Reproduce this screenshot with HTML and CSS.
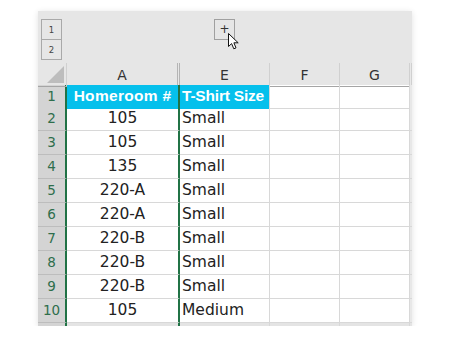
FILE: index.html
```html
<!DOCTYPE html>
<html lang="en">
<head>
    <meta charset="UTF-8">
    <title>Grouped columns</title>
    <link rel="stylesheet" href="styles.css">
</head>
<body>
    <div class="sheet">
        <div class="outline">
            <div class="levels">
                <div class="level">1</div>
                <div class="level">2</div>
            </div>
            <div></div>
            <div class="expand-cell">
                <div class="expand">+</div>
                <svg class="cursor" width="12" height="18" viewBox="0 0 12 18">
                    <path d="M0.5 0.5 L0.5 13.5 L3.6 10.6 L5.8 15.8 L8 14.9 L5.9 9.8 L10.2 9.8 Z" fill="#fff" stroke="#111" stroke-width="1" stroke-linejoin="round"/>
                </svg>
            </div>
        </div>

        <div class="row col-heads">
            <div class="corner"><span class="tri"></span></div>
            <div class="head hidden-after">A</div>
            <div class="head">E</div>
            <div class="head">F</div>
            <div class="head">G</div>
            <div class="edge"></div>
        </div>

        <div class="row first">
            <div class="num">1</div>
            <div class="cell a title wide">Homeroom #</div>
            <div class="cell e title tight">T-Shirt Size</div>
            <div class="cell"></div>
            <div class="cell"></div>
            <div class="edge"></div>
        </div>
        <div class="row"><div class="num">2</div><div class="cell a">105</div><div class="cell e">Small</div><div class="cell"></div><div class="cell"></div><div class="edge"></div></div>
        <div class="row"><div class="num">3</div><div class="cell a">105</div><div class="cell e">Small</div><div class="cell"></div><div class="cell"></div><div class="edge"></div></div>
        <div class="row"><div class="num">4</div><div class="cell a">135</div><div class="cell e">Small</div><div class="cell"></div><div class="cell"></div><div class="edge"></div></div>
        <div class="row"><div class="num">5</div><div class="cell a">220-A</div><div class="cell e">Small</div><div class="cell"></div><div class="cell"></div><div class="edge"></div></div>
        <div class="row"><div class="num">6</div><div class="cell a">220-A</div><div class="cell e">Small</div><div class="cell"></div><div class="cell"></div><div class="edge"></div></div>
        <div class="row"><div class="num">7</div><div class="cell a">220-B</div><div class="cell e">Small</div><div class="cell"></div><div class="cell"></div><div class="edge"></div></div>
        <div class="row"><div class="num">8</div><div class="cell a">220-B</div><div class="cell e">Small</div><div class="cell"></div><div class="cell"></div><div class="edge"></div></div>
        <div class="row"><div class="num">9</div><div class="cell a">220-B</div><div class="cell e">Small</div><div class="cell"></div><div class="cell"></div><div class="edge"></div></div>
        <div class="row"><div class="num">10</div><div class="cell a">105</div><div class="cell e">Medium</div><div class="cell"></div><div class="cell"></div><div class="edge"></div></div>
        <div class="row cut">
            <div class="num"></div><div class="cell a"></div><div class="cell e"></div><div class="cell"></div><div class="cell"></div><div class="edge"></div>
        </div>
    </div>
</body>
</html>
```

FILE: styles.css
```css
body {
    margin: 0;
    background-color: #fff;
    font-family: "DejaVu Sans", sans-serif;
    color: #222;
}
.sheet {
    width: 374px;
    margin: 11px 0 0 38px;
    background-color: #fff;
    box-shadow: 0 1px 6px rgba(0, 0, 0, 0.12);
}
.outline {
    display: grid;
    grid-template-columns: 29px 113px 232px;
    height: 52px;
    background-color: #e6e6e6;
}
.levels {
    display: flex;
    flex-direction: column;
    padding: 8px 0 0 3px;
}
.level {
    width: 19px;
    height: 19px;
    border: 1px solid #a9a9a9;
    margin-bottom: -1px;
    font-size: 8.5px;
    color: #444;
    display: flex;
    align-items: center;
    justify-content: center;
}
.expand-cell {
    position: relative;
    padding: 8px 0 0 34px;
}
.expand {
    width: 19px;
    height: 19px;
    border: 1px solid #a0a0a0;
    font-size: 12px;
    line-height: 18px;
    text-align: center;
    color: #333;
}
.cursor {
    position: absolute;
    left: 48px;
    top: 22px;
}
.row {
    display: grid;
    grid-template-columns: 29px 113px 90px 70px 70px 2px;
    height: 24px;
}
.row > div {
    box-sizing: border-box;
    border-bottom: 1px solid #d8d8d8;
}
.col-heads {
    height: 22px;
    background-color: #e6e6e6;
}
.col-heads > div {
    border-bottom: 1px solid #a5a5a5;
    border-right: 1px solid #d0d0d0;
}
.corner {
    position: relative;
}
.tri {
    position: absolute;
    right: 2px;
    bottom: 3px;
    width: 0;
    height: 0;
    border-left: 17px solid transparent;
    border-bottom: 17px solid #bdbdbd;
}
.head {
    font-size: 14px;
    color: #333;
    text-align: center;
    line-height: 22px;
    padding-top: 1px;
}
.col-heads .hidden-after {
    border-right: 3px double #b4b4b4;
}
.first {
    height: 22px;
}
.num {
    background-color: #d4d4d4;
    color: #2e6e4c;
    font-size: 13.5px;
    text-align: center;
    line-height: 23px;
    border-right: 2px solid #217346;
}
.row .num {
    border-bottom-color: #bdbdbd;
}
.cell {
    font-size: 15.5px;
    line-height: 23px;
    border-right: 1px solid #d8d8d8;
    white-space: nowrap;
    overflow: hidden;
}
.cell.a {
    text-align: center;
    border-right: 2px solid #217346;
}
.cell.e {
    padding-left: 2px;
}
.title {
    background-color: #05c0ec;
    color: #fff;
    font-family: "Liberation Sans", Arial, sans-serif;
    font-weight: bold;
    font-size: 15.5px;
    line-height: 21px;
}
.wide {
    letter-spacing: 0.3px;
}
.tight {
    letter-spacing: -0.2px;
}
.row .cell.title {
    border-bottom-color: #05c0ec;
}
.edge {
    background-color: #e8e8e8;
}
.cut {
    height: 3px;
}
.cut > div {
    border-bottom: none;
    background-color: #e4e4e4;
}
.cut .num {
    background-color: #d4d4d4;
}
```
